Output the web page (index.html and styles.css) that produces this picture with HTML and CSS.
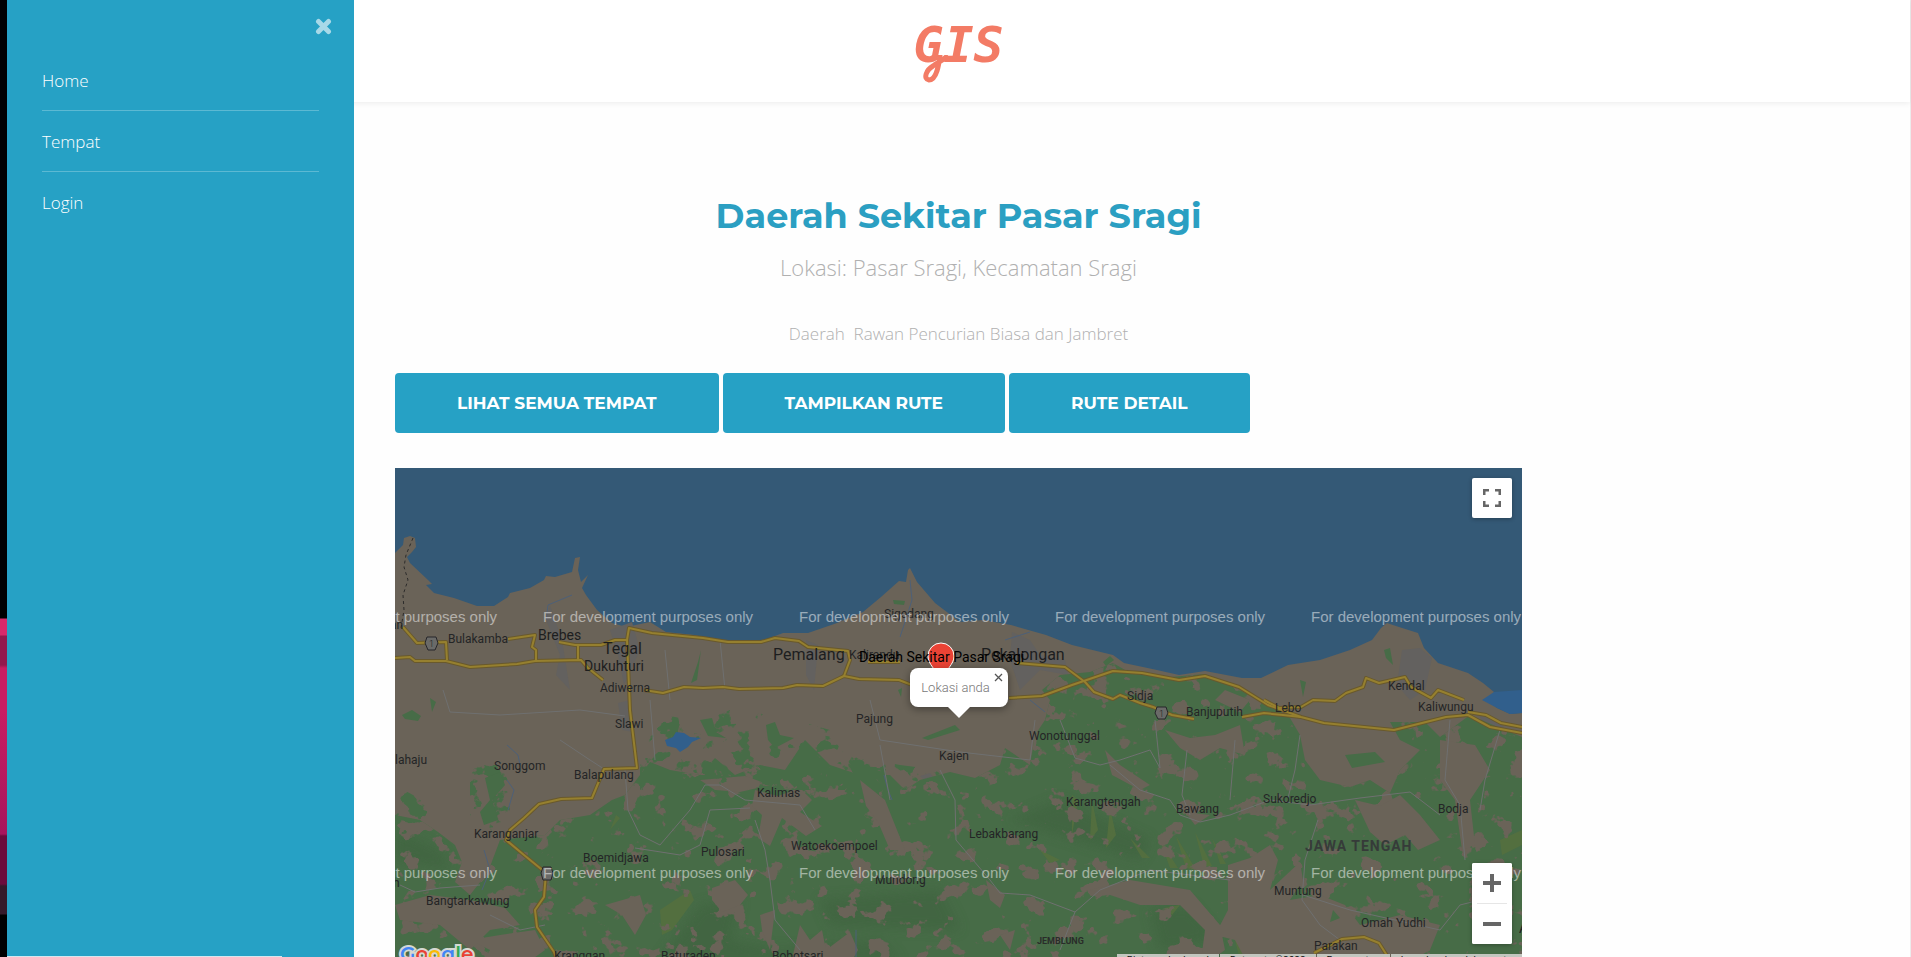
FILE: index.html
```html
<!DOCTYPE html>
<html lang="id">
<head>
<meta charset="utf-8">
<title>GIS - Daerah Sekitar Pasar Sragi</title>
<meta name="viewport" content="width=device-width, initial-scale=1">
<link rel="stylesheet" href="styles.css">
</head>
<body>
<div class="edge" aria-hidden="true"></div>
<div class="page">
  <nav class="sidebar" aria-label="Menu">
    <button class="sidebar-close" type="button" aria-label="Tutup menu">
      <svg width="17" height="17" viewBox="0 0 17 17"><path d="M3.5 3.5l10 10M13.5 3.5l-10 10" stroke="currentColor" stroke-width="5" stroke-linecap="round"/></svg>
    </button>
    <ul class="menu">
      <li><a href="#home">Home</a></li>
      <li><a href="#tempat">Tempat</a></li>
      <li><a href="#login">Login</a></li>
    </ul>
    <div class="status-line"></div>
  </nav>

  <header class="topbar">
    <a class="logo" href="#home">GIS<svg class="swash" width="28" height="28" viewBox="0 0 28 28" aria-hidden="true"><path d="M17 0C16 8 14 25 6 25C0 24 3 15 10 11C16 7 20 5 23 2" fill="none" stroke="currentColor" stroke-width="5" stroke-linecap="round"/></svg></a>
  </header>

  <main class="content">
    <h1>Daerah Sekitar Pasar Sragi</h1>
    <p class="lead">Lokasi: Pasar Sragi, Kecamatan Sragi</p>
    <p class="desc">Daerah&nbsp; Rawan Pencurian Biasa dan Jambret</p>
    <div class="actions">
      <a class="btn" href="#semua">LIHAT SEMUA TEMPAT</a>
      <button class="btn" type="button">TAMPILKAN RUTE</button>
      <button class="btn" type="button">RUTE DETAIL</button>
    </div>

    <section class="map" aria-label="Peta">
      <svg class="map-canvas" viewBox="395 468 1127 500" preserveAspectRatio="xMidYMid slice">
        <defs>
          <filter id="mottle" x="0" y="0" width="100%" height="100%" color-interpolation-filters="sRGB">
            <feTurbulence type="fractalNoise" baseFrequency="0.045 0.05" numOctaves="4" seed="8"/>
            <feColorMatrix values="0 0 0 0 0.415  0 0 0 0 0.388  0 0 0 0 0.345  24 0 0 0 -14.4"/>
          </filter>
          <filter id="woods" x="0" y="0" width="100%" height="100%" color-interpolation-filters="sRGB">
            <feTurbulence type="fractalNoise" baseFrequency="0.045 0.05" numOctaves="4" seed="21"/>
            <feColorMatrix values="0 0 0 0 0.278  0 0 0 0 0.424  0 0 0 0 0.278  24 0 0 0 -13.8"/>
          </filter>
          <filter id="soft"><feGaussianBlur stdDeviation="6"/></filter>
          <clipPath id="forest"><path d="M395 815L420 820L438 832L455 845L462 862L455 882L470 895L488 872L500 840L545 835L560 820L590 815L612 800L625 795L640 775L650 762L670 770L700 775L715 758L735 775L760 765L785 770L805 740L830 765L860 775L890 775L905 790L920 780L950 772L975 778L1000 765L1005 748L1030 765L1035 735L1045 720L1050 700L1042 690L1060 675L1090 672L1113 663L1125 670L1160 678L1205 674L1240 690L1268 704L1290 718L1300 735L1305 760L1320 780L1350 787L1370 780L1390 793L1400 770L1420 750L1400 740L1390 722L1425 722L1440 737L1470 715L1500 728L1522 737V968H395Z"/></clipPath>
          <clipPath id="foothills"><path d="M640 740L665 715L700 722L730 710L780 716L830 730L850 755L900 765L940 770V790H640ZM470 765H510V835H470ZM395 785L440 810V830H395Z"/></clipPath>
        </defs>

        <rect x="395" y="468" width="1127" height="500" fill="#345976"/>
        <path fill="#6a6358" d="M395 553L403 545L404 538L410 536L415 538L416 547L412 552L407 557L410 563L428 580L432 584L426 585L434 593L454 598L477 606L494 606L508 597L510 593L530 588L544 580L546 576L555 577L572 572L575 558L580 557L578 570L581 582L588 575L582 588L586 595L597 610L612 623L626 627L650 622L666 632L695 635L717 641L761 641L783 633L808 633L837 623L863 612L881 597L899 581L906 582L908 570L910 568L917 582L935 603L960 622L983 620L1011 625L1046 635L1072 645L1113 655L1124 663L1157 670L1179 675L1205 671L1242 678L1261 678L1288 665L1320 660L1350 650L1372 640L1381 628L1387 623L1399 627L1418 633L1424 648L1438 663L1468 673L1483 683L1494 692L1490 702L1497 708L1510 714L1522 713V968H395Z"/>

        <g fill="#63615f">
          <path d="M550 605L562 640L570 690L556 675L560 655L546 620ZM610 630L632 622L640 650L624 685L618 655ZM618 703L630 700L633 732L622 730ZM806 640L818 645L814 690L806 675ZM1012 632L1030 640L1040 655L1065 660L1068 675L1040 670L1020 690L1010 660ZM1402 650L1420 648L1432 658L1425 690L1410 700L1397 685ZM920 776L930 773L934 778L926 782Z"/>
          <path d="M1478 712L1500 722L1515 745L1505 760L1490 740ZM1355 948L1378 945L1386 968H1350Z"/>
        </g>

        <g clip-path="url(#forest)">
          <rect x="395" y="650" width="1127" height="318" fill="#476c47"/>
          <g fill="#3f643f" filter="url(#soft)" opacity=".7">
            <path d="M395 830L440 850L450 870L395 860ZM700 905L740 900L730 940L780 950L880 940L900 960H660ZM820 900L940 890L960 930L830 925ZM1010 820L1060 800L1150 840L1140 860ZM1150 910L1190 905L1220 940L1160 950Z"/>
          </g>
          <g fill="#56703e" opacity=".85">
            <path d="M660 910L690 890L694 900L672 930L662 935ZM1072 795L1078 800L1072 835ZM1092 800L1098 830L1090 840ZM1110 808L1116 835L1106 848ZM1160 840L1178 868L1170 868ZM1176 836L1196 870L1186 868ZM1195 832L1212 866L1204 866ZM1212 838L1226 864L1220 864ZM1235 940L1256 950L1240 960ZM1500 840L1522 830V845L1502 855ZM610 830L616 815L620 818ZM1130 838L1150 858L1142 858ZM1040 850L1060 860L1050 863ZM1164 908L1180 905L1172 915Z"/>
          </g>
          <rect x="395" y="650" width="1127" height="318" filter="url(#mottle)"/>
          <g fill="#6a6358">
            <path d="M395 905L430 895L470 900L505 908L520 925L490 930L470 950L440 925L400 920ZM470 940L500 935L535 930L545 950L520 968H480L490 950ZM605 905L640 895L646 915L635 935L622 915ZM712 888L735 880L748 895L740 905L722 912L712 900ZM755 790L778 796L800 788L812 800L800 812L822 826L806 836L782 818L770 846L758 838L762 815L752 806ZM700 780L745 776L770 785L740 792L715 790ZM860 780L885 800L905 850L890 850L878 822L866 806ZM760 915L775 910L770 950L762 930ZM800 925L810 940L822 930L826 950L850 932L858 950L848 968H790Z"/>
            <path d="M1228 865L1250 858L1270 845L1278 860L1270 890L1300 862L1303 880L1290 900L1320 895L1345 905L1360 925L1400 915L1440 925L1430 950L1400 968H1250L1235 940L1215 935L1228 910ZM986 880L1005 895L1000 908L990 900ZM1090 890L1130 880L1190 890L1220 925L1225 950L1200 968L1205 930L1180 905L1140 905L1110 895ZM1105 750L1120 765L1150 785L1140 790L1112 775ZM1165 730L1190 738L1215 735L1240 725L1245 755L1220 748L1200 760L1180 748ZM1215 700L1225 690L1250 700L1240 712ZM1355 800L1380 806L1400 795L1420 815L1440 840L1418 850L1405 835L1385 845L1370 832ZM1440 740L1475 745L1490 770L1470 800L1475 845L1462 850L1455 800L1440 780ZM1000 935L1015 930L1010 950ZM1185 812L1210 815L1195 825Z"/>
          </g>
        </g>
        <g clip-path="url(#foothills)"><rect x="395" y="700" width="570" height="140" filter="url(#woods)"/></g>
        <g fill="#476c47">
          <path d="M402 715L412 710L421 716L418 721L405 719ZM485 778L500 772L505 785L492 800L498 820L484 825L480 812L490 800ZM700 720L712 718L716 732L726 738L708 736ZM766 725L775 722L780 735L794 738L775 748L768 740ZM922 738L955 725L960 730L928 740ZM893 600L905 601L904 605L894 604ZM698 662L701 650L697 680L691 683ZM898 690L902 688L901 697ZM1103 662L1110 656L1114 660L1106 666ZM1384 650L1390 648L1393 665L1386 658ZM1300 680L1306 682L1303 697ZM1345 755L1375 752L1385 762L1352 768ZM430 698L436 702L432 712ZM1333 910L1340 918L1330 922Z"/>
        </g>
        <path fill="#315f8c" d="M665 740L673 737L676 732L684 733L690 737L701 738L692 742L688 747L680 752L676 748L667 746ZM1482 700L1497 708L1510 714L1522 713V690L1494 692Z"/>

        <path class="river" d="M546 620L548 605L560 600L572 595M910 580L912 600L904 625L900 637M1005 640L1030 632M507 745L518 755L520 765M507 780L514 790L508 810M484 850L490 870L482 890M884 775L888 790L892 800M856 930V968M1030 700L1045 712"/>
        <path class="lane" d="M443 690L450 712L500 715L580 710L625 716M560 740L590 760L604 769M625 770L628 810L640 835L660 845L690 810L705 785L720 785L745 800L800 805L815 830M635 848L680 855L700 845L710 810L750 808M755 820L765 850L770 880L775 920L800 950M400 885L415 892L440 888L480 885M490 915L520 930L545 925M650 700L655 760M870 700L880 740L960 752L1030 760L1035 720M880 745L890 800M940 770L955 800L956 840L990 880L1000 893L1030 895L1075 912L1100 890L1150 870L1230 880M1060 720L1075 758L1100 765L1120 760L1150 750L1160 768L1155 720M1110 765L1140 790L1170 800L1180 815L1200 822L1230 815L1270 800L1310 805L1360 798L1410 792L1440 815M1187 750L1182 795L1190 815M1235 740L1230 800M1300 735L1295 770L1288 798M1318 820L1305 860L1302 900L1320 925L1340 940M1303 895L1350 910L1440 930L1460 905L1480 900M1450 720L1445 780L1460 805L1465 860M1075 912L1060 950M1500 730L1485 780L1480 810M670 700L665 650M720 640L725 690"/>
        <g class="road-edge">
          <path id="highway" d="M395 658L410 657L415 661L446 661L470 667L517 664L535 661L581 660L588 668L603 680M644 690L663 693L684 687L703 688L723 687L739 689L783 688L797 685L823 686L844 676L859 679L899 680L912 685M1009 698L1042 696L1072 685L1113 671L1142 673L1179 680L1205 676L1239 687L1268 705L1301 717L1324 723L1394 730L1446 717L1468 715L1490 727L1522 733"/>
          <path id="roads" d="M403 627L417 643L446 642L447 660M508 639L535 635L532 647L536 650V661M559 642L575 645L601 645L615 640L627 640L629 628L652 633L703 638L728 642L761 642L775 638L799 641L808 647L848 651L850 660L844 676M578 646V660M627 640L630 710L637 768L604 769L592 798L561 799L539 804L524 818L510 830L506 840L524 855L546 873L544 897L535 910L537 927L554 952L560 968M868 662H900M1017 663L1065 667L1085 682L1094 692L1113 699L1120 695L1140 703L1153 707L1172 715L1194 719M1242 717L1264 713L1283 715L1301 717M1264 700L1279 708L1301 707L1313 700L1335 701L1346 693L1363 687L1366 678L1379 683L1405 677L1411 687L1431 698L1438 690L1464 700M1468 712L1486 715L1501 723L1522 727M1314 953L1342 939L1364 937L1379 943L1388 957V968"/>
        </g>
        <g class="road-fill"><use href="#highway"/><use href="#roads"/></g>
        <path d="M413 538L406 555L404 567L408 580L403 595L404 610L401 628" class="border"/>

        <g class="shield">
          <path d="M427 637H436L438 643L435 650H428L425 643Z"/><path d="M1157 707H1166L1168 713L1165 719H1158L1155 713Z"/><path d="M543 867H551L553 873L551 880H543L541 873Z"/>
          <text x="429" y="647">1</text><text x="1159" y="717">1</text>
        </g>

        <g class="place">
          <text x="390" y="629">an</text><text x="448" y="643">Bulakamba</text><text x="600" y="692">Adiwerna</text>
          <text x="849" y="659">Kalirandu</text><text x="884" y="618">Sigedang</text><text x="615" y="728">Slawi</text>
          <text x="395" y="764">lahaju</text><text x="494" y="770">Songgom</text><text x="574" y="779">Balapulang</text>
          <text x="757" y="797">Kalimas</text><text x="856" y="723">Pajung</text><text x="939" y="760">Kajen</text>
          <text x="474" y="838">Karanganjar</text><text x="583" y="862">Boemidjawa</text><text x="701" y="856">Pulosari</text>
          <text x="791" y="850">Watoekoempoel</text><text x="875" y="884">Mundong</text><text x="426" y="905">Bangtarkawung</text>
          <text x="393" y="887">h</text><text x="554" y="960">Kranggan</text><text x="661" y="960">Baturaden</text><text x="772" y="960">Bobotsari</text>
          <text x="1127" y="700">Sidja</text><text x="1186" y="716">Banjuputih</text><text x="1275" y="712">Lebo</text>
          <text x="1388" y="690">Kendal</text><text x="1418" y="711">Kaliwungu</text><text x="1029" y="740">Wonotunggal</text>
          <text x="1066" y="806">Karangtengah</text><text x="1176" y="813">Bawang</text><text x="1263" y="803">Sukoredjo</text>
          <text x="1438" y="813">Bodja</text><text x="969" y="838">Lebakbarang</text><text x="1274" y="895">Muntung</text>
          <text x="1361" y="927">Omah Yudhi</text><text x="1314" y="950">Parakan</text>
        </g>
        <g class="town">
          <text x="538" y="640">Brebes</text><text x="584" y="671">Dukuhturi</text><text x="1519" y="933">A</text>
        </g>
        <g class="city">
          <text x="603" y="654">Tegal</text><text x="773" y="660">Pemalang</text><text x="981" y="660">Pekalongan</text>
        </g>
        <text class="peak" x="1037" y="944">JEMBLUNG</text>
        <text class="province" x="1305" y="851">JAWA TENGAH</text>

        <g class="watermark">
          <text x="287" y="622">For development purposes only</text><text x="543" y="622">For development purposes only</text><text x="799" y="622">For development purposes only</text><text x="1055" y="622">For development purposes only</text><text x="1311" y="622">For development purposes only</text>
          <text x="287" y="878">For development purposes only</text><text x="543" y="878">For development purposes only</text><text x="799" y="878">For development purposes only</text><text x="1055" y="878">For development purposes only</text><text x="1311" y="878">For development purposes only</text>
        </g>

        <path d="M941 643a13 13 0 0 1 13 13c0 9-8 12-13 27c-5-15-13-18-13-27a13 13 0 0 1 13-13z" fill="#ea4335" stroke="#fff" stroke-width="1"/>
        <text class="marker-label" x="859" y="662">Daerah Sekitar Pasar Sragi</text>
      </svg>

      <div class="popup">
        <span>Lokasi anda</span>
        <button class="popup-close" type="button" aria-label="Tutup"><svg width="9" height="9" viewBox="0 0 9 9"><path d="M1 1l7 7M8 1L1 8" stroke="#555" stroke-width="1.3"/></svg></button>
      </div>

      <button class="control fullscreen" type="button" aria-label="Layar penuh">
        <svg width="18" height="18" viewBox="0 0 18 18"><path d="M1.250 6V1.250H6M12 1.250h4.750V6M16.750 12v4.750H12M6 16.750H1.250V12" fill="none" stroke="#666" stroke-width="2.500"/></svg>
      </button>
      <div class="zoom">
        <button class="control" type="button" aria-label="Perbesar"><svg width="18" height="18" viewBox="0 0 18 18"><path d="M0 9h18M9 0v18" stroke="#666" stroke-width="4"/></svg></button>
        <hr>
        <button class="control" type="button" aria-label="Perkecil"><svg width="18" height="18" viewBox="0 0 18 18"><path d="M0 9h18" stroke="#666" stroke-width="4"/></svg></button>
      </div>
      <a class="google" href="#google"><span class="b">G</span><span class="r">o</span><span class="y">o</span><span class="b">g</span><span class="g">l</span><span class="r">e</span></a>
      <div class="credits">
        <button type="button">Pintasan keyboard</button>
        <span>Data peta ©2022</span>
        <a href="#terms">Persyaratan</a>
        <a href="#report">Laporkan kesalahan peta</a>
      </div>
    </section>
  </main>
</div>
</body>
</html>
```
FILE: styles.css
```css
* {
  box-sizing: border-box;
}

body {
  margin: 0;
  height: 100vh;
  overflow: hidden;
  display: flex;
  background: #fefefe;
  font-family: "Open Sans", "Noto Sans", sans-serif;
}

button {
  font: inherit;
  border: 0;
  margin: 0;
  cursor: pointer;
}

a {
  text-decoration: none;
}

.edge {
  flex: 0 0 7px;
  background: linear-gradient(#000 618px, #d8296a 619px, #d8296a 635px, #93194d 636px, #93194d 665px, #c81e62 668px, #c81e62 710px, #a8155c 834px, #6b0c3c 836px, #6b0c3c 884px, #351a2a 886px, #351a2a 914px, #000 915px);
}

.page {
  position: relative;
  flex: 1;
  min-width: 0;
  border-right: 1px solid #ececec;
}

.sidebar {
  position: absolute;
  top: 0;
  left: 0;
  z-index: 2;
  display: flex;
  flex-direction: column;
  width: 347px;
  height: 100vh;
  background: #26a1c5;
}

.sidebar-close {
  align-self: flex-end;
  display: flex;
  margin: 18px 22px 0 0;
  padding: 0;
  color: #a8d9e8;
  background: none;
}

.menu {
  margin: 15px 35px 0;
  padding: 0;
  list-style: none;
  font-size: 17px;
  font-weight: 300;
  line-height: 58px;
}

.menu li {
  padding-top: 2px;
}

.menu li + li {
  border-top: 1px solid #5cb9d3;
}

.menu a {
  display: block;
  color: #fff;
}

.status-line {
  width: 275px;
  height: 1px;
  margin-top: auto;
  background: #d6e6ee;
}

.topbar {
  display: flex;
  justify-content: center;
  height: 102px;
  background: #fff;
  box-shadow: 0 1px 6px rgba(0, 0, 0, .08);
}

.logo {
  position: relative;
  height: 72px;
  color: #f37b65;
  font: italic bold 50px/90px "DejaVu Sans Mono", monospace;
}

.swash {
  position: absolute;
  left: 10px;
  top: 55px;
}

.content {
  max-width: 1127px;
  margin: 0 auto;
  padding-top: 90px;
  color: #b0b0b0;
  font-weight: 300;
  text-align: center;
}

h1 {
  margin: 0;
  color: #2b9fc2;
  font: bold 35px/48px Montserrat, Inter, sans-serif;
}

.lead {
  margin: 10px 0 0;
  font-size: 22px;
  line-height: 34px;
}

.desc {
  margin: 36px 0 0;
  font-size: 17px;
  line-height: 28px;
}

.actions {
  display: flex;
  flex-wrap: wrap;
  gap: 4px;
  margin: 25px 0 35px;
}

.btn {
  padding: 0 62px;
  border-radius: 4px;
  background: #26a1c5;
  color: #fff;
  font: bold 17px/60px Montserrat, Inter, sans-serif;
}

.map {
  position: relative;
  height: 500px;
  overflow: hidden;
  font-family: Roboto, sans-serif;
}

.map-canvas {
  display: block;
  width: 100%;
  height: 100%;
  text-align: left;
}

.river {
  fill: none;
  stroke: #4d6078;
}

.lane {
  fill: none;
  stroke: #6f7070;
}

.road-edge,
.road-fill {
  fill: none;
  stroke-linejoin: round;
}

.road-edge {
  stroke: #69592c;
  stroke-width: 4;
}

.road-fill {
  stroke: #96802f;
  stroke-width: 2;
}

.border {
  fill: none;
  stroke: #2c2b2a;
  stroke-dasharray: 3 3;
}

.shield path {
  fill: #6a6a68;
  stroke: #26262a;
}

.shield text {
  fill: #222;
  font-size: 9px;
}

.place {
  fill: #242526;
  font-size: 12px;
  font-weight: 400;
}

.town {
  fill: #1d1e1f;
  font-size: 14px;
  font-weight: 400;
}

.city {
  fill: #1d1e1f;
  font-size: 16px;
  font-weight: 400;
}

.peak {
  fill: #2a2c2a;
  font-size: 9px;
  font-weight: 700;
}

.province {
  fill: #363b39;
  font-size: 14px;
  font-weight: 700;
  letter-spacing: 1px;
}

.watermark {
  fill: rgba(255, 255, 255, .5);
  font: 400 15px "Liberation Sans", sans-serif;
}

.marker-label {
  fill: #000;
  font-size: 14px;
  font-weight: 400;
}

.popup {
  position: absolute;
  left: 50%;
  top: 200px;
  width: 98px;
  margin-left: -49px;
  padding-right: 6px;
  border-radius: 8px;
  background: #fff;
  box-shadow: 0 2px 7px 1px rgba(0, 0, 0, .3);
  color: #777;
  font-size: 13px;
  line-height: 39px;
}

.popup::after {
  content: "";
  position: absolute;
  left: 38px;
  top: 39px;
  border: 11px solid transparent;
  border-top-color: #fff;
  border-bottom: 0;
}

.popup-close {
  position: absolute;
  right: 5px;
  top: 5px;
  display: flex;
  padding: 0;
  background: none;
}

.control {
  display: flex;
  align-items: center;
  justify-content: center;
  width: 40px;
  height: 40px;
  padding: 0;
  border-radius: 2px;
  background: #fff;
}

.fullscreen {
  position: absolute;
  right: 10px;
  top: 10px;
  box-shadow: 0 1px 4px rgba(0, 0, 0, .3);
}

.zoom {
  position: absolute;
  right: 10px;
  bottom: 24px;
  border-radius: 2px;
  background: #fff;
  box-shadow: 0 1px 4px rgba(0, 0, 0, .3);
}

.zoom hr {
  height: 1px;
  margin: 0 5px;
  border: 0;
  background: #e6e6e6;
}

.google {
  position: absolute;
  left: 5px;
  bottom: 0;
  font: 600 20px/28px Montserrat, Inter, sans-serif;
  -webkit-text-stroke: 4px #d5d8d2;
  paint-order: stroke fill;
}

.google .b { color: #4285f4; }
.google .r { color: #e94235; }
.google .y { color: #fabb05; }
.google .g { color: #34a853; }

.credits {
  position: absolute;
  right: 0;
  bottom: 0;
  display: flex;
  gap: 1px;
  font-size: 10px;
  font-weight: 400;
  line-height: 14px;
}

.credits > * {
  padding: 0 10px;
  background: #c3c6bf;
  color: #111;
}
```
